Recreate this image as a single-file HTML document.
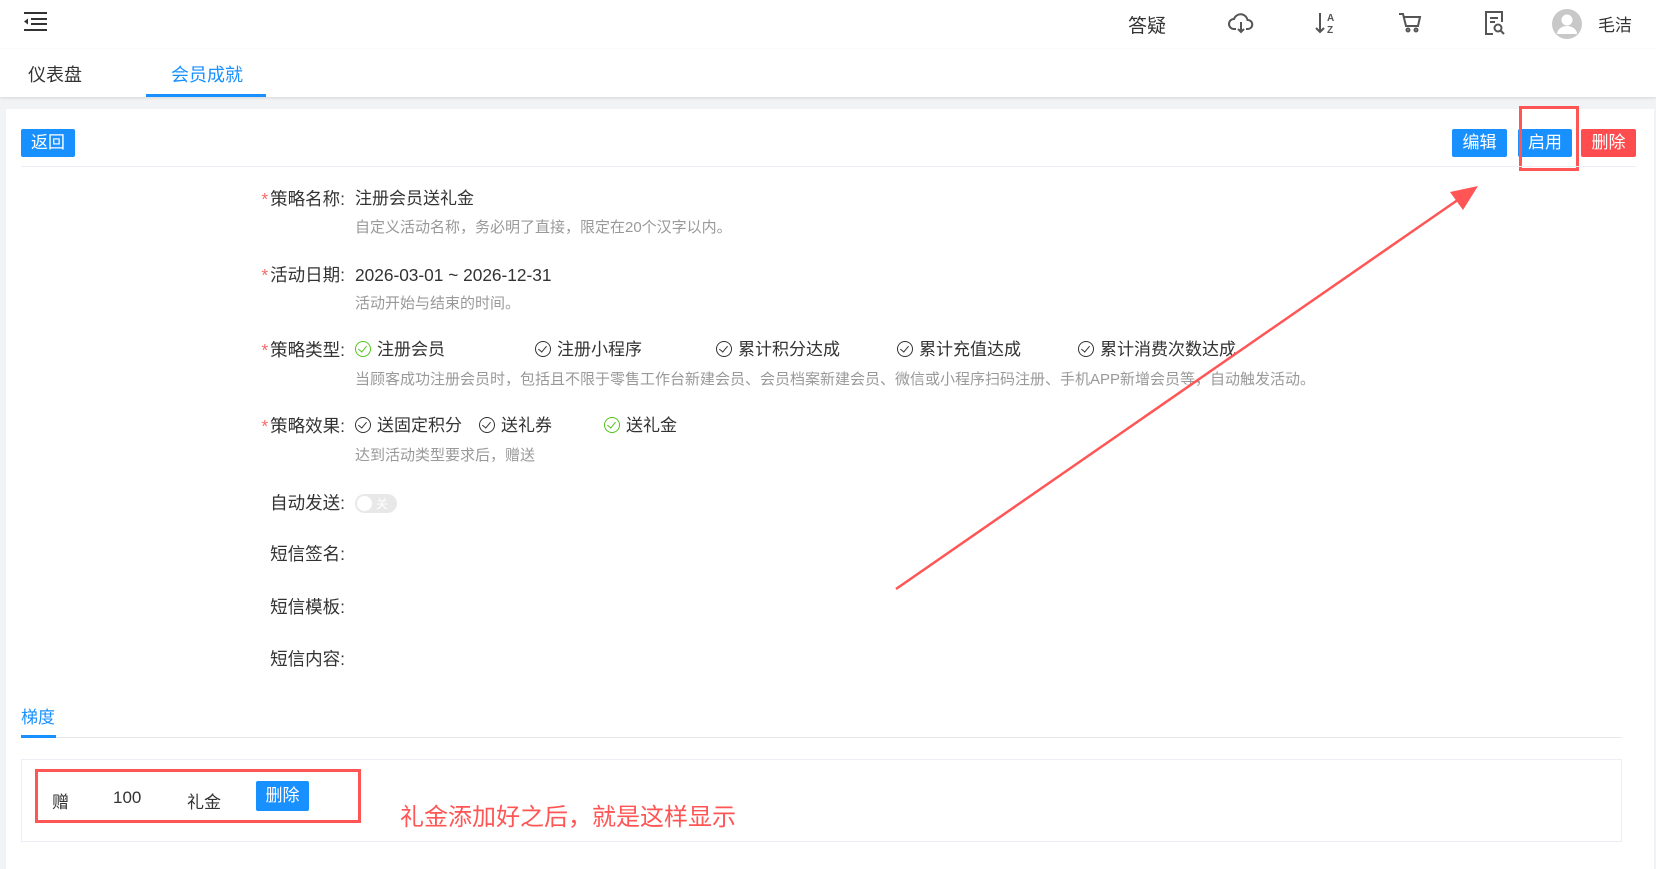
<!DOCTYPE html>
<html><head><meta charset="utf-8"><style>
*{margin:0;padding:0;box-sizing:border-box}
body{width:1656px;height:869px;overflow:hidden;background:#f2f3f5;font-family:"Liberation Sans","Noto Sans CJK SC",sans-serif;color:#333;position:relative}
.a{position:absolute;white-space:nowrap}
.hdr{position:absolute;left:0;top:0;width:1656px;height:49px;background:#fff}
.tabs{position:absolute;left:0;top:49px;width:1656px;height:48px;background:#fff;box-shadow:0 1px 3px rgba(0,0,0,.12)}
.card{position:absolute;left:6px;top:109px;width:1648px;height:760px;background:#fff}
.btn{position:absolute;height:28px;line-height:28px;color:#fff;font-size:17px;text-align:center;border-radius:2px;background:#1890ff}
.lbl{position:absolute;width:200px;left:145px;text-align:right;font-size:17.5px;color:#333;line-height:20px}
.lbl b{color:#f56c6c;font-weight:normal;margin-right:2px}
.val{position:absolute;left:355px;font-size:17px;line-height:20px;white-space:nowrap}
.hint{position:absolute;left:355px;font-size:15px;color:#999;line-height:18px;white-space:nowrap}
.opt{position:absolute;font-size:17px;line-height:20px;white-space:nowrap}
.opt i{display:inline-block;width:16px;height:16px;border:1.5px solid #333;border-radius:50%;vertical-align:-2px;margin-right:6px;position:relative}
.opt i:after{content:"";position:absolute;left:4px;top:2px;width:4px;height:7px;border:solid #333;border-width:0 1.5px 1.5px 0;transform:rotate(40deg)}
.opt.g i,.opt.g i:after{border-color:#52c41a}
</style></head><body>
<div class="hdr">
<svg class="a" style="left:24px;top:12px" width="23" height="19" viewBox="0 0 23 19"><g stroke="#333" stroke-width="2"><path d="M0 1H23M7 7H23M7 12H23M0 18H23"/></g><path d="M0 9.5L4 6.5V12.5Z" fill="#333"/></svg>
<div class="a" style="left:1128px;top:11px;font-size:19px;color:#333">答疑</div>
<svg class="a" style="left:1228px;top:12px" width="26" height="22" viewBox="0 0 26 22" fill="none" stroke="#555" stroke-width="2"><path d="M8 17H6a5 5 0 0 1 0-10 7 7 0 0 1 13.5 1A4.5 4.5 0 0 1 20 17h-2"/><path d="M13 10v10M10 17l3 3 3-3"/></svg>
<svg class="a" style="left:1314px;top:11px" width="24" height="24" viewBox="0 0 24 24" fill="none" stroke="#555" stroke-width="2"><path d="M6 2v19M2 17l4 4 4-4"/><text x="13" y="10" font-size="10" fill="#555" stroke="none" font-family="Liberation Sans" font-weight="bold">A</text><text x="13" y="22" font-size="10" fill="#555" stroke="none" font-family="Liberation Sans" font-weight="bold">Z</text></svg>
<svg class="a" style="left:1398px;top:12px" width="24" height="22" viewBox="0 0 24 22" fill="none" stroke="#555" stroke-width="2"><path d="M1 2h4l3 12h12l2-9H6"/><circle cx="10" cy="18" r="1.5"/><circle cx="18" cy="18" r="1.5"/></svg>
<svg class="a" style="left:1484px;top:10px" width="22" height="26" viewBox="0 0 22 26" fill="none" stroke="#555" stroke-width="2"><path d="M9 24H2V2h16v10"/><path d="M6 8h8M6 12h5"/><circle cx="14" cy="18" r="3.5"/><path d="M16.5 20.5l3.5 3.5"/></svg>
<svg class="a" style="left:1552px;top:9px" width="30" height="30" viewBox="0 0 30 30"><circle cx="15" cy="15" r="15" fill="#c8c8c8"/><circle cx="15" cy="11" r="5.5" fill="#fff"/><path d="M5 25a10 8 0 0 1 20 0z" fill="#fff"/></svg>
<div class="a" style="left:1598px;top:11px;font-size:17px;color:#333">毛洁</div>
</div>
<div class="tabs">
<div class="a" style="left:28px;top:12px;font-size:18px;color:#333">仪表盘</div>
<div class="a" style="left:171px;top:12px;font-size:18px;color:#1890ff">会员成就</div>
<div class="a" style="left:146px;top:45px;width:120px;height:3px;background:#1890ff"></div>
</div>
<div class="card"></div>
<div class="btn" style="left:21px;top:129px;width:54px">返回</div>
<div class="btn" style="left:1452px;top:129px;width:55px">编辑</div>
<div class="btn" style="left:1518px;top:129px;width:54px">启用</div>
<div class="btn" style="left:1581px;top:129px;width:55px;background:#ff4d4f">删除</div>
<div class="a" style="left:1519px;top:106px;width:60px;height:65px;border:3px solid #f55"></div>
<div class="a" style="left:21px;top:166px;width:1615px;height:1px;background:#ebeef5"></div>

<div class="lbl" style="top:189px"><b>*</b>策略名称:</div><div class="val" style="top:189px">注册会员送礼金</div>
<div class="hint" style="top:219px">自定义活动名称，务必明了直接，限定在20个汉字以内。</div>
<div class="lbl" style="top:265px"><b>*</b>活动日期:</div><div class="val" style="top:265px;font-size:17.3px">2026-03-01 ~ 2026-12-31</div>
<div class="hint" style="top:295px">活动开始与结束的时间。</div>
<div class="lbl" style="top:340px"><b>*</b>策略类型:</div>
<div class="opt g" style="left:355px;top:340px"><i></i>注册会员</div>
<div class="opt" style="left:535px;top:340px"><i></i>注册小程序</div>
<div class="opt" style="left:716px;top:340px"><i></i>累计积分达成</div>
<div class="opt" style="left:897px;top:340px"><i></i>累计充值达成</div>
<div class="opt" style="left:1078px;top:340px"><i></i>累计消费次数达成</div>
<div class="hint" style="top:371px">当顾客成功注册会员时，包括且不限于零售工作台新建会员、会员档案新建会员、微信或小程序扫码注册、手机APP新增会员等，自动触发活动。</div>
<div class="lbl" style="top:416px"><b>*</b>策略效果:</div>
<div class="opt" style="left:355px;top:416px"><i></i>送固定积分</div>
<div class="opt" style="left:479px;top:416px"><i></i>送礼券</div>
<div class="opt g" style="left:604px;top:416px"><i></i>送礼金</div>
<div class="hint" style="top:447px">达到活动类型要求后，赠送</div>
<div class="lbl" style="top:493px">自动发送:</div>
<div class="a" style="left:355px;top:494px;width:42px;height:19px;border-radius:10px;background:#e8e8e8"><div class="a" style="left:2px;top:2px;width:15px;height:15px;border-radius:50%;background:#fff"></div><div class="a" style="left:21px;top:1px;font-size:12px;color:#fff">关</div></div>
<div class="lbl" style="top:544px">短信签名:</div>
<div class="lbl" style="top:597px">短信模板:</div>
<div class="lbl" style="top:649px">短信内容:</div>

<div class="a" style="left:21px;top:703px;font-size:17px;color:#1890ff">梯度</div>
<div class="a" style="left:21px;top:737px;width:1601px;height:1px;background:#e8e8e8"></div>
<div class="a" style="left:21px;top:735px;width:35px;height:3px;background:#1890ff"></div>
<div class="a" style="left:21px;top:759px;width:1601px;height:83px;border:1px solid #ebeef5"></div>
<div class="a" style="left:35px;top:769px;width:326px;height:54px;border:3px solid #f55"></div>
<div class="a" style="left:52px;top:788px;font-size:17px">赠</div>
<div class="a" style="left:113px;top:788px;font-size:17px">100</div>
<div class="a" style="left:187px;top:788px;font-size:17px">礼金</div>
<div class="btn" style="left:256px;top:781px;width:53px;height:30px;line-height:30px">删除</div>
<div class="a" style="left:400px;top:797px;font-size:24px;color:#f55">礼金添加好之后，就是这样显示</div>
<svg class="a" style="left:0;top:0" width="1656" height="869"><line x1="896" y1="589" x2="1462" y2="197" stroke="#f55" stroke-width="2.5"/><path d="M1478 186L1450 192L1463 210Z" fill="#f55"/></svg>
</body></html>
